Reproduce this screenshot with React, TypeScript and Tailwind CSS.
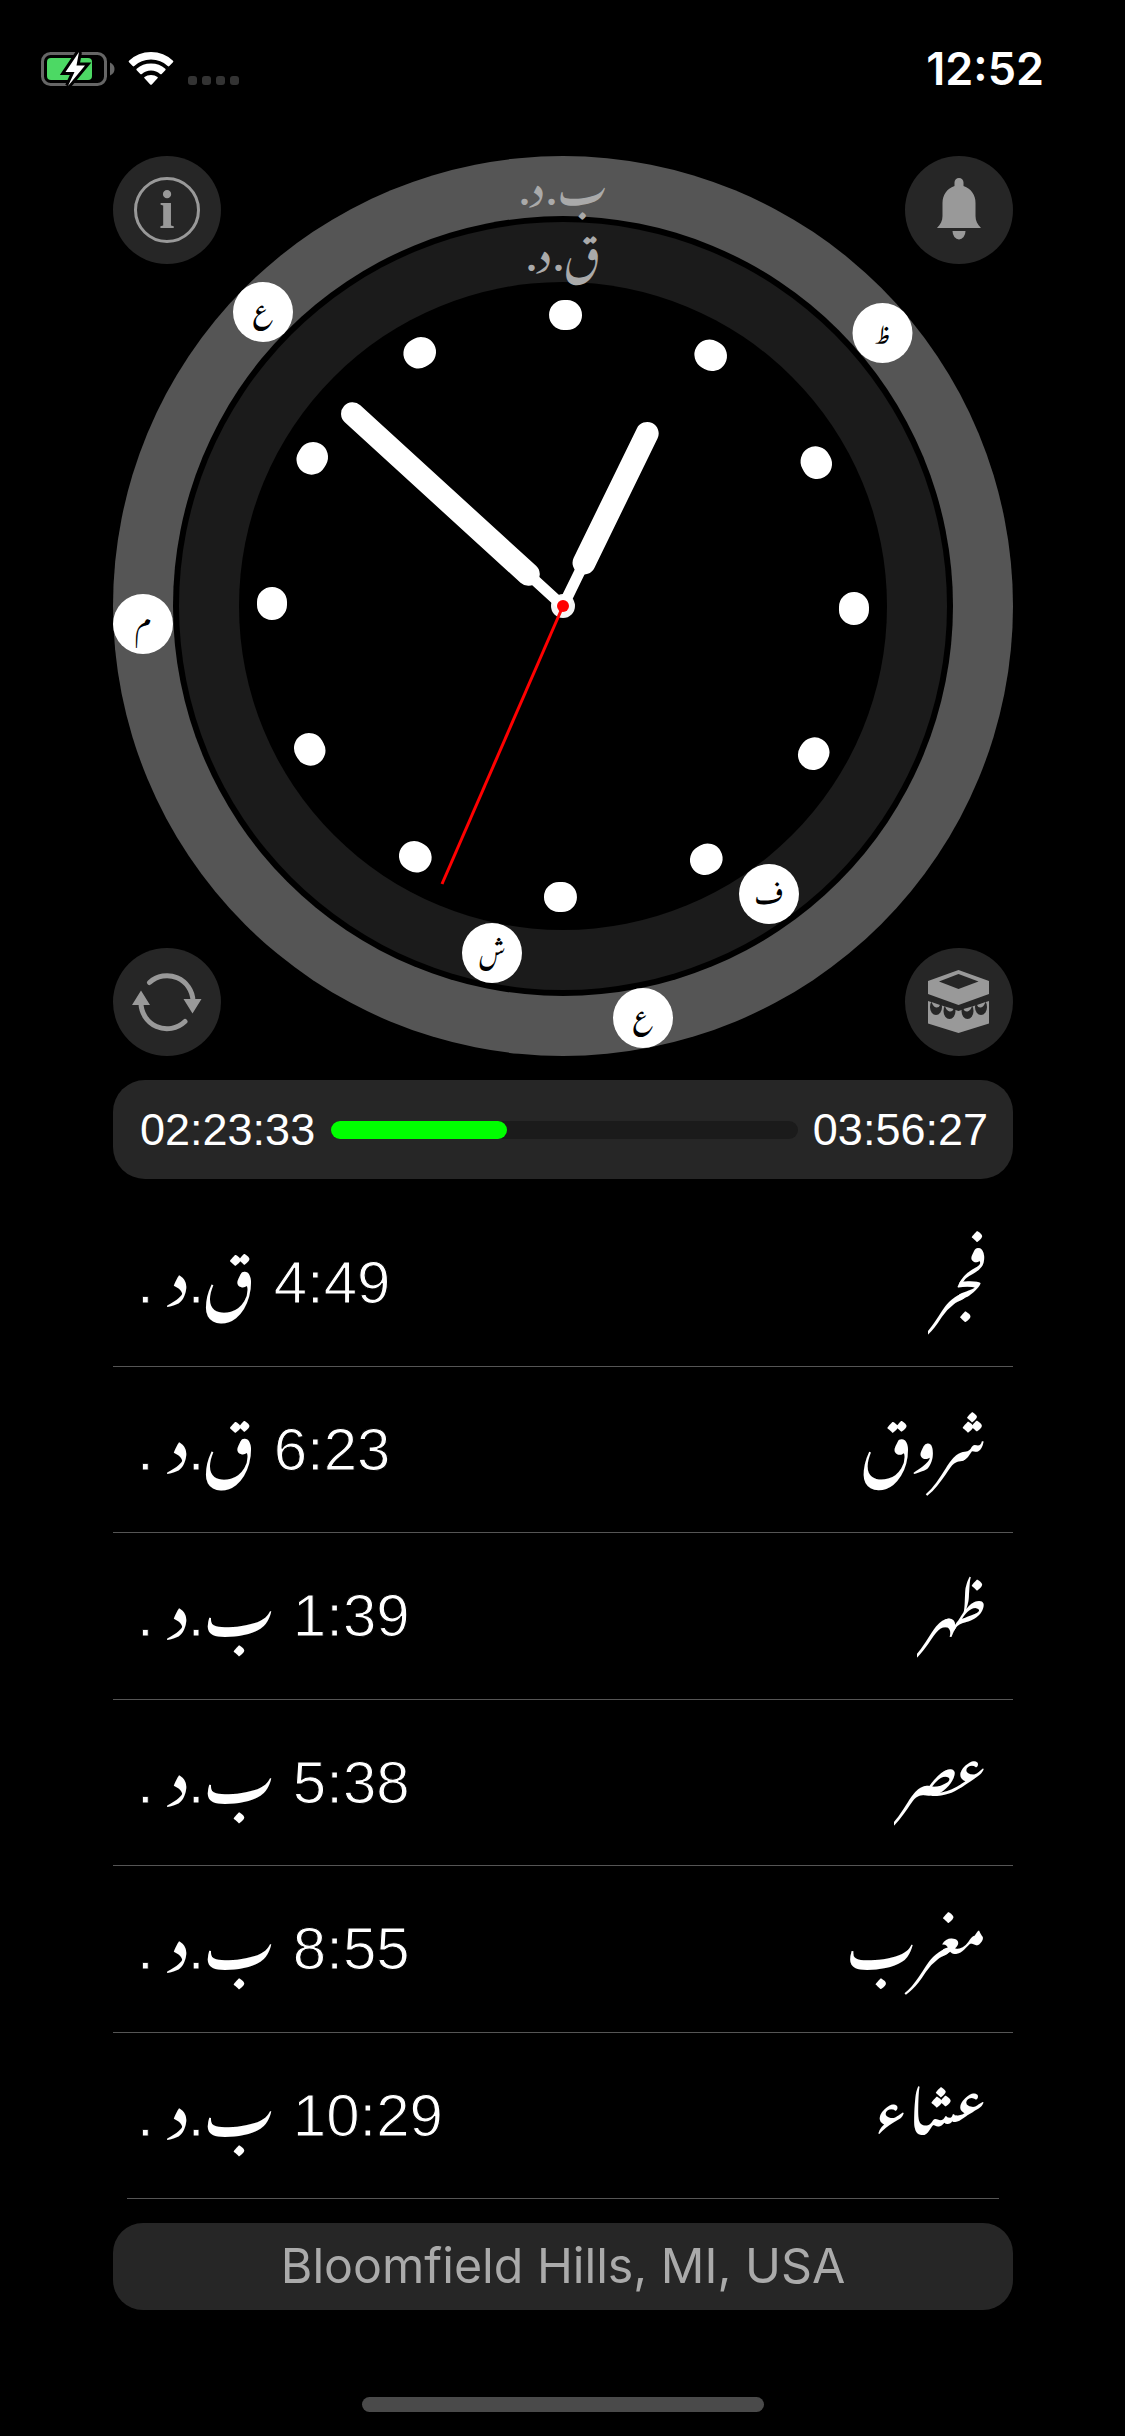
import type { ReactNode } from 'react';

const ARABIC = "'Noto Nastaliq Urdu', 'Noto Naskh Arabic', 'DejaVu Sans', sans-serif";

type Prayer = { name: string; time: string; am: boolean; box: string };

const prayers: Prayer[] = [
  { name: 'فجر', time: '4:49', am: true, box: 'pt-1 pl-1 overflow-x-clip' },
  { name: 'شروق', time: '6:23', am: true, box: 'pb-[18px]' },
  { name: 'ظهر', time: '1:39', am: false, box: 'pb-[18px] pl-[5px] overflow-x-clip' },
  { name: 'عصر', time: '5:38', am: false, box: 'pb-[16px] pl-[5px] overflow-x-clip' },
  { name: 'مغرب', time: '8:55', am: false, box: 'pb-[18px]' },
  { name: 'عشاء', time: '10:29', am: false, box: 'pb-[19px]' },
];

const badges = [
  { x: 150, y: 156, label: 'ع', ty: 166.5 },
  { x: 769.5, y: 177, label: 'ظ', ty: 187 },
  { x: 30, y: 468, label: 'م', ty: 478 },
  { x: 656, y: 738, label: 'ف', ty: 748 },
  { x: 379, y: 797, label: 'ش', ty: 807 },
  { x: 530, y: 862, label: 'ع', ty: 873 },
];

function StatusBar() {
  return (
    <header className="flex h-[156px] items-start justify-between pl-[41px] pr-[81px] pt-[52px]">
      <div className="flex">
        <svg width="74" height="34" viewBox="0 0 74 34">
          <rect x="1.5" y="1.5" width="63" height="31" rx="8" fill="none" stroke="#666" strokeWidth="3" />
          <path d="M69 10.500q4.500 2 4.500 6.500t-4.500 6.500z" fill="#666" />
          <rect x="6" y="6" width="45" height="22" rx="4" fill="#4cd964" />
          <path d="M38 0 24.500 20h9L27 34 44 13.500h-8.500L38 0Z" fill="#fff" stroke="#000" strokeWidth="6" paintOrder="stroke" />
        </svg>
        <svg className="ml-[13px]" width="46" height="34" viewBox="0 0 46 34">
          <path d="M1 10.300Q.2 9.500 1 8.800 10 0 23 0t22 8.800q.8.700 0 1.500L41.300 14q-.8.800-1.600 0Q33 7.500 23 7.500T6.300 14q-.8.800-1.600 0Z" fill="#fff" />
          <path d="M8.700 18.200q-.8-.8 0-1.500Q14.500 11.500 23 11.500t14.300 5.200q.8.700 0 1.500L33.700 22q-.8.700-1.600 0Q28.500 18.500 23 18.500t-9.100 3.500q-.8.700-1.600 0Z" fill="#fff" />
          <path d="M16.500 26.200q-.8-.8 0-1.300Q19 23 23 23t6.500 1.900q.8.500 0 1.300L23.800 32.400q-.8.800-1.600 0Z" fill="#fff" />
        </svg>
        <div className="ml-[14px] mt-6 flex gap-[5px]">
          {[0, 1, 2, 3].map((n) => (
            <span key={n} className="size-[9px] rounded-[3px] bg-[#333]" />
          ))}
        </div>
      </div>
      <span className="font-[Inter] text-[45px] font-semibold leading-[34px] text-white">12:52</span>
    </header>
  );
}

function RoundButton({ label, children }: { label: string; children: ReactNode }) {
  return (
    <button aria-label={label} className="flex size-[108px] items-center justify-center rounded-full bg-[#262626]">
      {children}
    </button>
  );
}

function InfoIcon() {
  return (
    <span className="flex size-[66px] items-center justify-center rounded-full border-[3px] border-[#999] pb-[2px] font-['Liberation_Serif'] text-[55px] font-bold leading-none text-[#999]">
      i
    </span>
  );
}

function BellIcon() {
  return (
    <svg width="108" height="108" viewBox="0 0 108 108" fill="#999">
      <path d="M49.500 30v-3.500a4.500 4.500 0 0 1 9 0V30c8 3 12 9 12 17v13c0 5 2 8 5.500 12H32c3.500-4 5.500-7 5.500-12V47c0-8 4-14 12-17Z" />
      <path d="M47.500 75h13a6.500 8.500 0 0 1-13 0Z" />
    </svg>
  );
}

function RefreshIcon() {
  return (
    <svg width="108" height="108" viewBox="0 0 108 108" fill="none">
      <path d="M36.500 34.500A26 26 0 0 1 80 53M72 73.500A26 26 0 0 1 28 54" stroke="#999" strokeWidth="5" strokeLinecap="round" />
      <path d="M70.500 51h18L79.500 65.500ZM19 57h18L28 42.500Z" fill="#999" />
    </svg>
  );
}

function KaabaIcon() {
  return (
    <svg width="108" height="108" viewBox="0 0 108 108">
      <path d="M53.500 22 84 33v13L53.500 57 23 46V33Z" fill="#999" />
      <path d="M53.500 26 73.500 33.500 53.500 41 34 33.500Z" fill="#262626" />
      <path d="M23 53 53.500 63 84 53v22.500L53.500 85 23 75.500Z" fill="#999" />
      <g fill="#262626">
        <ellipse cx="31" cy="59" rx="6" ry="8" />
        <ellipse cx="44.500" cy="63" rx="6" ry="8" />
        <ellipse cx="62.500" cy="63" rx="6" ry="8" />
        <ellipse cx="76" cy="59" rx="6" ry="8" />
      </g>
      <g fill="#999">
        <path d="M26.500 54 35 57q-1 2.800-3.800 2.500T26.500 54Z" />
        <path d="M40 58.500 48.500 61q-1 2.800-3.800 2.500T40 58.500Z" />
        <path d="M80.500 54 72 57q1 2.800 3.800 2.500t4.700-5.500Z" />
        <path d="M67 58.500 58.500 61q1 2.800 3.800 2.500t4.700-5Z" />
      </g>
    </svg>
  );
}

function HalfLabel({ letter, x, y }: { letter: string; x: number; y: number }) {
  return (
    <g fill="#aaa" fontFamily={ARABIC} fontSize="42">
      <text x={x + 37} y={y}>{letter}</text>
      <text x={x + 25.5} y={y} fontFamily="Lato" fontWeight="700">.</text>
      <text x={x + 10} y={y}>د</text>
      <text x={x - 1.5} y={y} fontFamily="Lato" fontWeight="700">.</text>
    </g>
  );
}

function Dial() {
  return (
    <svg className="col-start-1 row-start-1 overflow-visible" width="900" height="900" viewBox="0 0 900 900">
      <circle cx="450" cy="450" r="450" fill="#555" />
      <circle cx="450" cy="450" r="390" fill="#000" />
      <circle cx="450" cy="450" r="384" fill="#1b1b1b" />
      <circle cx="450" cy="450" r="324" fill="#000" />
      <HalfLabel letter="ب" x={408} y={49} />
      <HalfLabel letter="ق" x={415} y={115} />
      {Array.from({ length: 12 }, (_, n) => (
        <rect key={n} x="433.500" y="144" width="33" height="30" rx="15" fill="#fff" transform={`rotate(${n * 30 + 0.5} 450 450)`} />
      ))}
      <circle cx="450" cy="450" r="12" fill="#f4f4f4" />
      <g stroke="#fff" strokeLinecap="round">
        <g transform="rotate(26 450 450)">
          <path d="M450 450V400" strokeWidth="11" />
          <path d="M450 402V258" strokeWidth="23" />
        </g>
        <g transform="rotate(-47.600 450 450)">
          <path d="M450 450V400" strokeWidth="11" />
          <path d="M450 403V165" strokeWidth="23" />
        </g>
      </g>
      <path d="M450 450 329 728" stroke="#f00" strokeWidth="3" />
      <circle cx="450" cy="450" r="6" fill="#f00" />
      <g fontFamily={ARABIC} fontSize="23.500" textAnchor="middle">
        {badges.map((b) => (
          <g key={`${b.x}`}>
            <circle cx={b.x} cy={b.y} r="30" fill="#fff" />
            <text x={b.x} y={b.ty} fill="#000">{b.label}</text>
          </g>
        ))}
      </g>
    </svg>
  );
}

function Progress() {
  return (
    <section className="mt-6 flex h-[99px] items-center justify-between rounded-[32px] bg-[#262626] pl-[27px] pr-[25px] font-['Liberation_Sans'] text-[45px] leading-none text-white">
      <span>02:23:33</span>
      <div className="h-[18px] w-[467px] rounded-full bg-[#1b1b1b]">
        <div className="h-full w-[176px] rounded-full bg-[#00ff00]" />
      </div>
      <span>03:56:27</span>
    </section>
  );
}

function PrayerRow({ prayer }: { prayer: Prayer }) {
  return (
    <li className="flex h-[166.500px] items-center justify-between border-b border-[#555] pb-[18px] pl-6 pr-[26px] last:mx-[14px] last:pl-[10px] last:pr-3">
      <div dir="rtl" className="flex items-baseline font-['Liberation_Sans'] text-[60px] leading-none text-white">
        <span className="[-webkit-text-stroke:1.100px_#000]">{prayer.time}</span>
        <span className="mr-[18px]" style={{ fontFamily: ARABIC }}>{prayer.am ? 'ق' : 'ب'}</span>
        <span className="[-webkit-text-stroke:0.800px_#000]">.</span>
        <span style={{ fontFamily: ARABIC }}>د</span>
        <span className="mr-4 [-webkit-text-stroke:0.800px_#000]">.</span>
      </div>
      <span dir="rtl" className={`text-[59px] leading-none text-white ${prayer.box}`} style={{ fontFamily: ARABIC }}>{prayer.name}</span>
    </li>
  );
}

export default function App() {
  return (
    <main className="flex h-[2436px] w-[1125px] flex-col bg-black">
      <StatusBar />
      <div className="ml-[113px] w-[900px]">
        <section className="grid size-[900px]">
          <div className="col-start-1 row-start-1 grid grid-cols-2 content-between">
            <RoundButton label="Info"><InfoIcon /></RoundButton>
            <div className="flex justify-end"><RoundButton label="Alerts"><BellIcon /></RoundButton></div>
            <div className="col-span-2 h-[684px]" />
            <RoundButton label="Refresh"><RefreshIcon /></RoundButton>
            <div className="flex justify-end"><RoundButton label="Qibla"><KaabaIcon /></RoundButton></div>
          </div>
          <Dial />
        </section>
        <Progress />
        <ul className="mt-[21px]">
          {prayers.map((p) => <PrayerRow key={p.time} prayer={p} />)}
        </ul>
        <div className="mt-6 flex h-[87px] items-center justify-center rounded-[30px] bg-[#262626] font-[Inter] text-[48.300px] leading-none text-[#aaa]">
          Bloomfield Hills, MI, USA
        </div>
      </div>
      <div className="ml-[362px] mt-[87px] h-[15px] w-[402px] rounded-full bg-[#4a4a4a]" />
    </main>
  );
}
